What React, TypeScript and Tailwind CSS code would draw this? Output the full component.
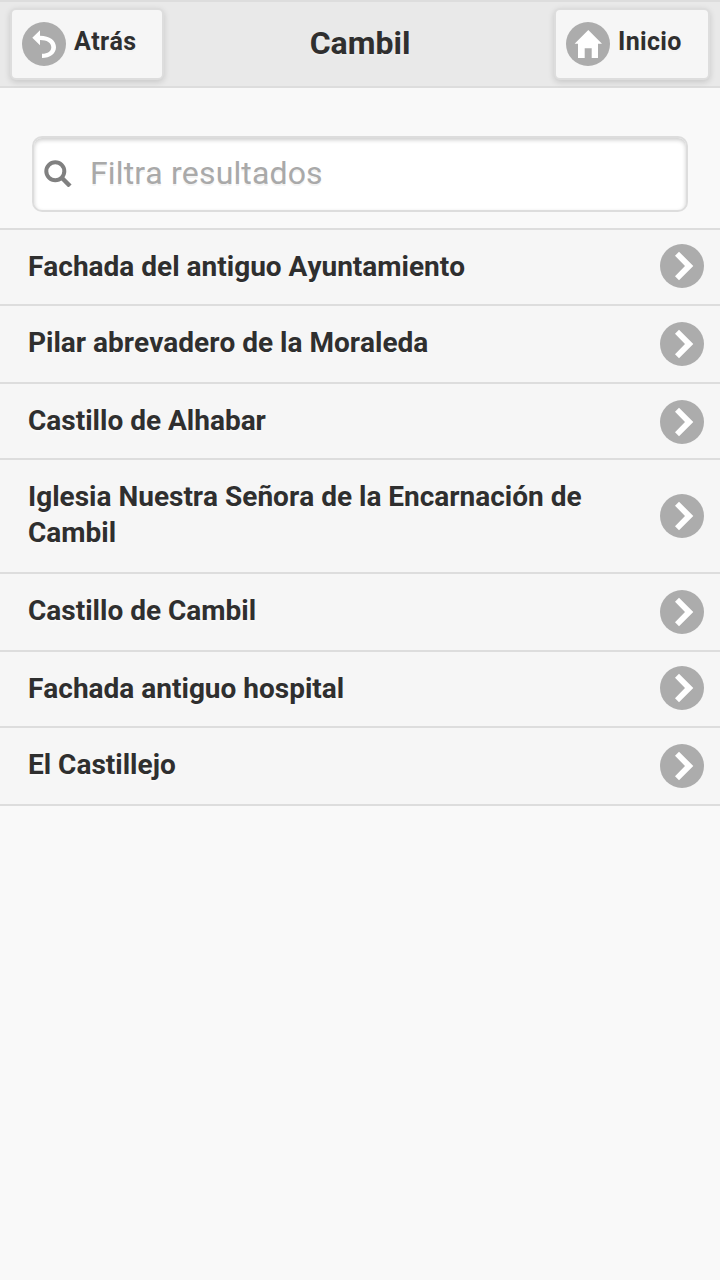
import React from "react";

const rows = [
  { label: "Fachada del antiguo Ayuntamiento", height: "h-[76px]", icon: "mt-[14px]" },
  { label: "Pilar abrevadero de la Moraleda", height: "h-[78px]", icon: "mt-[16px]" },
  { label: "Castillo de Alhabar", height: "h-[76px]", icon: "mt-[16px]" },
  { label: "Iglesia Nuestra Señora de la Encarnación de Cambil", height: "h-[114px]", icon: "mt-[34px]" },
  { label: "Castillo de Cambil", height: "h-[78px]", icon: "mt-[16px]" },
  { label: "Fachada antiguo hospital", height: "h-[76px]", icon: "mt-[14px]" },
  { label: "El Castillejo", height: "h-[78px]", icon: "mt-[16px]" },
];

function Disc({ d, className = "" }: { d: string; className?: string }) {
  return (
    <svg viewBox="0 0 44 44" className={`size-11 shrink-0 ${className}`} aria-hidden="true">
      <circle cx="22" cy="22" r="22" fill="#acacac" />
      <path d={d} fill="#fff" />
    </svg>
  );
}

function HeaderButton({ label, d, className }: { label: string; d: string; className: string }) {
  return (
    <button
      className={`flex h-[72px] items-start rounded-md border-2 border-[#dddddd] bg-[#f6f6f6] pt-3 pl-[10px] shadow-[0_2px_6px_rgba(0,0,0,0.15)] ${className}`}
    >
      <Disc d={d} />
      <span className="ml-2 text-[25px] leading-10 font-bold tracking-[0.35px] [text-shadow:0_2px_0_#f3f3f3]">{label}</span>
    </button>
  );
}

export default function App() {
  return (
    <div className="flex min-h-screen w-full flex-col bg-[#f9f9f9] font-['Roboto',sans-serif] text-[#2f2f2f] [font-kerning:none]">
      <header className="flex h-[88px] items-start justify-between border-y-2 border-[#dddddd] bg-[#e9e9e9] px-[10px] pt-[6px]">
        <HeaderButton
          label="Atrás"
          className="w-[154px]"
          d="M10.3 15.7 18 8.3V13.7C28 13.7 34 18.8 34 25.2C34 31.5 28 36 20 36V31.8C26 31.8 29.3 29 29.3 25.2C29.3 20.8 25 18 18 18V23.3Z"
        />
        <h1 className="ml-[2px] text-[32px] leading-[70px] font-bold [text-shadow:0_2px_0_#eeeeee]">Cambil</h1>
        <HeaderButton
          label="Inicio"
          className="w-[156px]"
          d="M22.3 8 36 21.7H32V36H25.7V26.3H18.7V36H12V21.7H8.6Z"
        />
      </header>

      <div className="px-8 pt-12 pb-4">
        <label className="flex h-[76px] items-start rounded-[10px] border-2 border-[#dddddd] bg-white pl-[10px] shadow-[inset_0_2px_4px_rgba(0,0,0,0.2)]">
          <svg viewBox="0 0 28 28" className="mt-[21px] size-7 shrink-0" aria-hidden="true">
            <circle cx="11.3" cy="12.2" r="9" fill="none" stroke="#808080" strokeWidth="4" />
            <path d="M17 18 26 27" stroke="#808080" strokeWidth="4.4" />
          </svg>
          <input
            type="text"
            placeholder="Filtra resultados"
            className="ml-[18px] h-[70px] min-w-0 flex-1 bg-transparent text-[32px] tracking-[0.14px] outline-none [text-shadow:0_2px_0_#f3f3f3] placeholder:text-[#a9a9a9]"
          />
        </label>
      </div>

      <ul className="border-b-2 border-[#dddddd]">
        {rows.map((row) => (
          <li
            key={row.label}
            className={`flex items-start justify-between border-t-2 border-[#dddddd] bg-[#f6f6f6] pr-4 pl-7 ${row.height}`}
          >
            <span className="w-[580px] pt-[19px] text-[28px] leading-9 font-bold [text-shadow:0_2px_0_#f9f9f9]">
              {row.label}
            </span>
            <Disc className={row.icon} d="M15 11.7 19 7.7 33.3 22 19 36.3 15 32.3 25 22Z" />
          </li>
        ))}
      </ul>
    </div>
  );
}
